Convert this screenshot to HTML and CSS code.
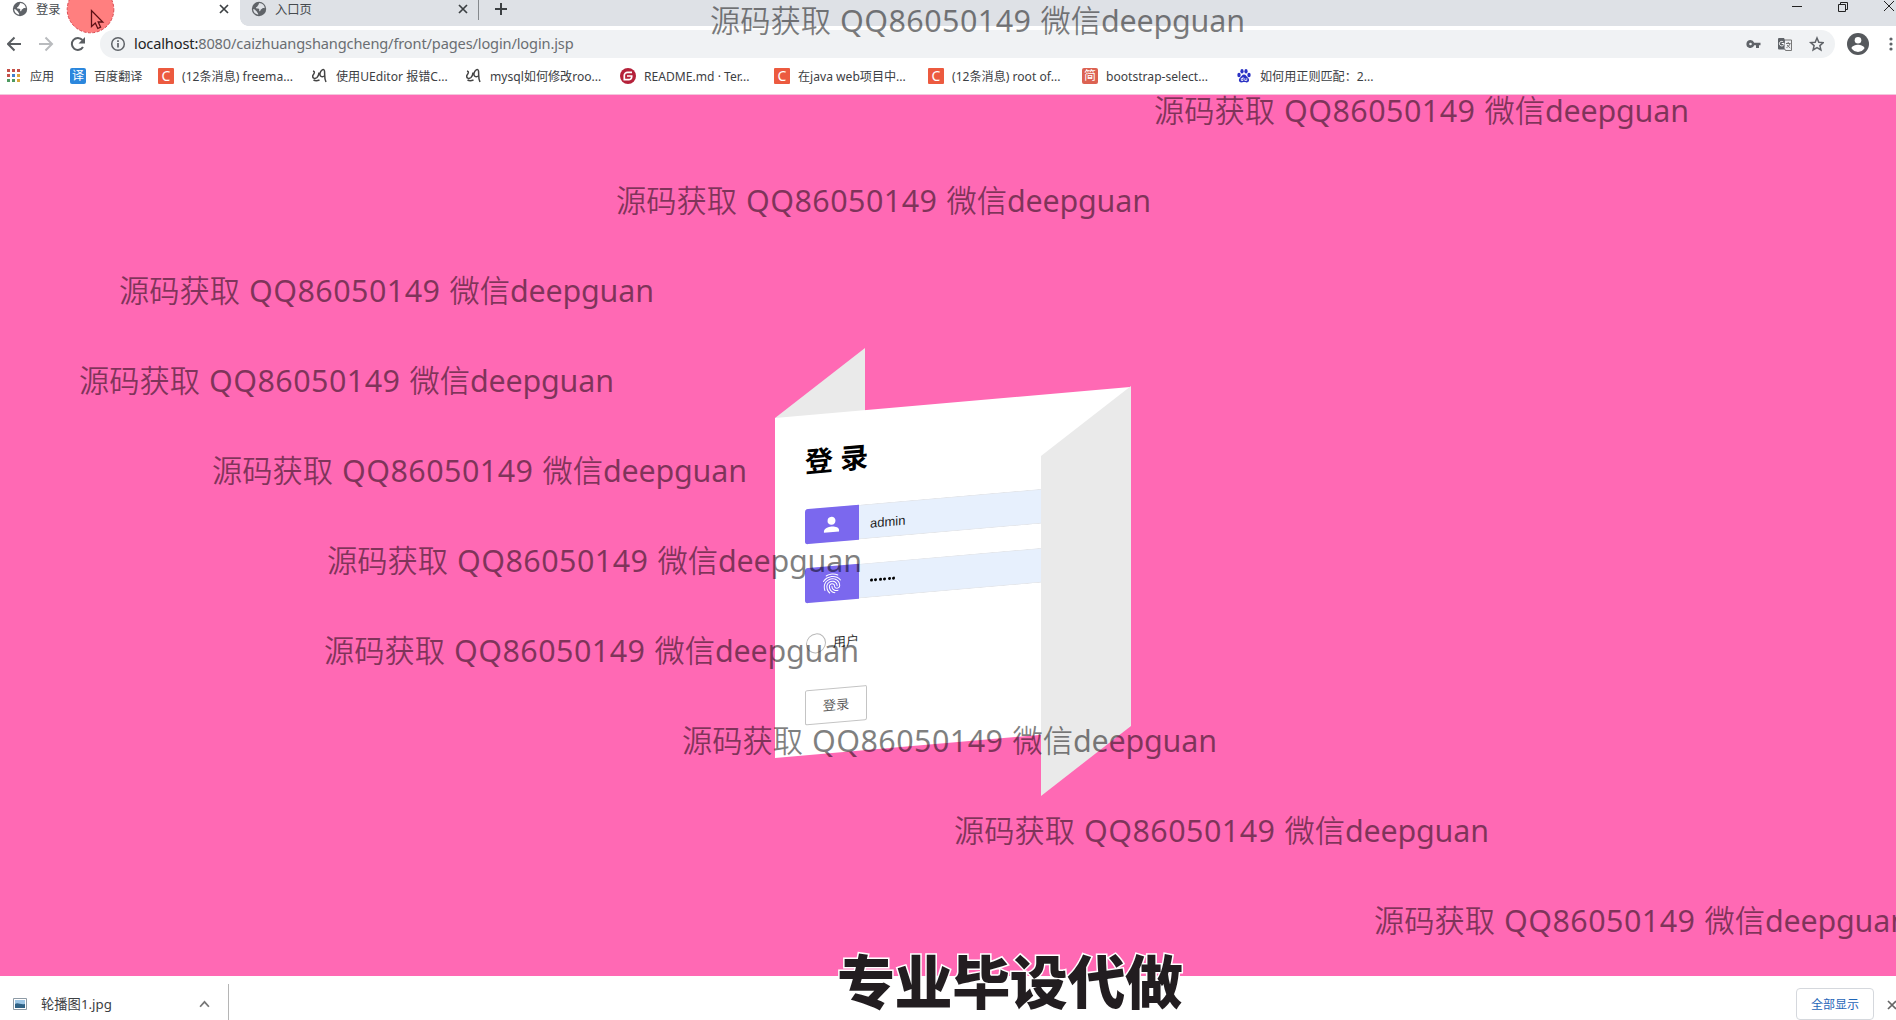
FILE: index.html
```html
<!DOCTYPE html>
<html lang="zh">
<head>
<meta charset="utf-8">
<title>登录</title>
<link rel="stylesheet" href="styles.css">
</head>
<body>
<div class="window">
  <header class="tabstrip">
    <div class="tab active">
      <svg class="globe" viewBox="0 0 16 16"><circle cx="8" cy="8" r="7.2" fill="#5f6368"/><path d="M8.3 2.1c-1 1.200-.2 1.700-1.300 2.300-1 .5-.3 1.300-1.300 1.600-1.200.4-.8 1.600.5 1.600 1.800 0 2.400.7 2 1.900-.4 1 1.100 1 1.200-.1.1-1.100 1.200-.8 1.900-1.800.4-.6 1.300-.5 2.500-.4A5.800 5.800 0 0 0 8.300 2.100zM2.200 8.100c1.200.3 2 .6 2.500 1.500.3.700 1.300.5 1.400 1.400.1.800 1.200.8 1.100 2.700A5.800 5.800 0 0 1 2.200 8.100z" fill="#fff"/></svg>
      <span class="tab-title">登录</span>
      <svg class="close" viewBox="0 0 10 10"><path d="M1 1l8 8M9 1l-8 8"/></svg>
    </div>
    <div class="tab idle">
      <svg class="globe" viewBox="0 0 16 16"><circle cx="8" cy="8" r="7.200" fill="#5f6368"/><path d="M8.300 2.100c-1 1.200-.2 1.700-1.300 2.300-1 .5-.3 1.300-1.300 1.600-1.200.4-.8 1.600.5 1.600 1.800 0 2.400.7 2 1.900-.4 1 1.100 1 1.200-.1.1-1.100 1.200-.8 1.900-1.800.4-.6 1.300-.5 2.500-.4A5.800 5.800 0 0 0 8.300 2.100zM2.200 8.100c1.200.3 2 .6 2.500 1.500.3.700 1.300.5 1.400 1.400.1.800 1.200.8 1.100 2.700A5.800 5.800 0 0 1 2.200 8.100z" fill="#dee1e6"/></svg>
      <span class="tab-title">入口页</span>
      <svg class="close" viewBox="0 0 10 10"><path d="M1 1l8 8M9 1l-8 8"/></svg>
    </div>
    <svg class="newtab" viewBox="0 0 12 12"><path d="M6 0v12M0 6h12"/></svg>
    <svg class="winbtns" viewBox="0 0 104 14"><path d="M0 6.500h10M46.500 4.500h7v7h-7zM48.500 4.500v-2h7v7h-2M92 1l10 10M102 1l-10 10"/></svg>
  </header>

  <div class="toolbar">
    <svg class="nav" viewBox="0 0 80 16"><g fill="none" stroke-width="2"><path d="M14 8H1.500M7.500 1.500L1 8l6.500 6.500" stroke="#5a5e62"/><path d="M32 8h12.500M38.500 1.500L45 8l-6.500 6.500" stroke="#b9bbbe"/><path d="M76 11a6 6 0 1 1-.6-7" stroke="#5a5e62"/></g><path d="M78 1v6.500h-6.500z" fill="#5a5e62"/></svg>
    <div class="omnibox">
      <svg class="info" viewBox="0 0 16 16"><circle cx="8" cy="8" r="6.300" fill="none" stroke="#5f6368" stroke-width="1.500"/><path d="M8 7v4.600M8 4.200v1.700" stroke="#5f6368" stroke-width="1.700"/></svg>
      <span class="url"><b>localhost:</b>8080/caizhuangshangcheng/front/pages/login/login.jsp</span>
      <svg class="actions" viewBox="0 0 78 16"><path d="M4.500 4a4 4 0 1 0 3.700 5.300H10V12h3V9.300h1.500V6.700H8.200A4 4 0 0 0 4.500 4zm0 2.700a1.300 1.300 0 1 1 0 2.600 1.300 1.300 0 0 1 0-2.600z" fill="#5f6368"/><path d="M33 2h5l1.500 3v8.500H33a1 1 0 0 1-1-1V3a1 1 0 0 1 1-1z" fill="#5f6368"/><path d="M39 4h6.500v10.500h-6l-1-2" fill="#eef0f3" stroke="#777" stroke-width="1"/><path d="M38 7.500h-2.300M38 7.500a2.300 2.300 0 1 1-.8-1.600" fill="none" stroke="#fff"/><path d="M40 7.500h4.500M42.200 6v1.500M44 7.500c-.5 2-2 3.500-3.500 4M41 9l3.200 3" fill="none" stroke="#777"/><path d="M71 2l1.800 4.200 4.500.4-3.400 3 1 4.400-3.900-2.300-3.900 2.300 1-4.400-3.400-3 4.500-.4z" fill="none" stroke="#5f6368" stroke-width="1.500"/></svg>
    </div>
    <svg class="profile" viewBox="0 0 22 22"><circle cx="11" cy="11" r="11" fill="#56595d"/><circle cx="11" cy="7.300" r="3.300" fill="#fff"/><path d="M4.500 15.300c0-2.300 4.300-3.500 6.500-3.500s6.500 1.200 6.500 3.500A8 8 0 0 1 11 18.900a8 8 0 0 1-6.500-3.600z" fill="#fff"/></svg>
    <svg class="menu" viewBox="0 0 4 14"><circle cx="2" cy="2" r="1.600"/><circle cx="2" cy="7" r="1.600"/><circle cx="2" cy="12" r="1.600"/></svg>
  </div>

  <nav class="bookmarks">
    <a class="mark apps"><svg viewBox="0 0 16 16"><path d="M1 1h3v3H1zM6 1h3v3H6zM1 6h3v3H1z" fill="#c5524a"/><path d="M11 1h3v3h-3z" fill="#c5524a"/><path d="M1 11h3v3H1zM6 11h3v3H6z" fill="#4f9a61"/><path d="M6 6h3v3H6z" fill="#3f7fd0"/><path d="M11 6h3v3h-3zM11 11h3v3h-3z" fill="#dba53a"/></svg><span>应用</span></a>
    <a class="mark fanyi"><i class="ico blue">译</i><span>百度翻译</span></a>
    <a class="mark"><i class="ico csdn">C</i><span>(12条消息) freema...</span></a>
    <a class="mark"><svg viewBox="0 0 16 16"><path d="M1 3c2.500.5 1 3-.2 4.500C.3 10 2.500 11.500 5 9.500c1.500-1.300 1.800-3 2-5M12 8c-2 1.500-4.500.5-4-2.500C8.500 2 12 0 12.500 3c.5 4-.5 7 1.500 11M7.500 12c-2 .800-4.500.8-6 0" fill="none" stroke="#444" stroke-width="1.500"/></svg><span>使用UEditor 报错C...</span></a>
    <a class="mark"><svg viewBox="0 0 16 16"><path d="M1 3c2.500.5 1 3-.2 4.500C.3 10 2.500 11.500 5 9.500c1.500-1.300 1.800-3 2-5M12 8c-2 1.500-4.500.5-4-2.500C8.500 2 12 0 12.500 3c.5 4-.5 7 1.500 11M7.500 12c-2 .800-4.500.8-6 0" fill="none" stroke="#444" stroke-width="1.500"/></svg><span>mysql如何修改roo...</span></a>
    <a class="mark"><svg viewBox="0 0 16 16"><circle cx="8" cy="8" r="8" fill="#b5213a"/><path d="M12 4.300H7.500a3.200 3.200 0 0 0-3.200 3.200v4.200h4.500a2.900 2.900 0 0 0 2.900-2.900V8H7" fill="none" stroke="#fff" stroke-width="1.700"/></svg><span>README.md · Ter...</span></a>
    <a class="mark"><i class="ico csdn">C</i><span>在java web项目中...</span></a>
    <a class="mark"><i class="ico csdn">C</i><span>(12条消息) root of...</span></a>
    <a class="mark"><i class="ico jian">简</i><span>bootstrap-select...</span></a>
    <a class="mark"><svg viewBox="0 0 16 16" fill="#2b32c4"><ellipse cx="3" cy="7" rx="1.700" ry="2.200"/><ellipse cx="6" cy="3.300" rx="1.600" ry="2.300"/><ellipse cx="10" cy="3.300" rx="1.600" ry="2.300"/><ellipse cx="13" cy="7" rx="1.700" ry="2.200"/><path d="M8 6.500c2 0 2.500 2 4 3.300 2 1.800 1 4.700-1.300 4.700-1.200 0-1.700-.4-2.700-.4s-1.500.4-2.700.4C3 14.500 2 11.600 4 9.800 5.500 8.500 6 6.500 8 6.500z"/><path d="M7 9v3.500H5.300v-2H7M8.800 10.200v2.300h2v-2.300" stroke="#fff" stroke-width=".8" fill="none"/></svg><span>如何用正则匹配：2...</span></a>
  </nav>

  <main class="page">
    <div class="cover">
      <div class="flap back"></div>
      <form class="face">
        <h1>登 录</h1>
        <div class="field">
          <span class="badge"><svg viewBox="0 0 18 18"><circle cx="9" cy="5" r="4.200" fill="#fff"/><path d="M1 17v-1.500C1 12.500 5.500 11 9 11s8 1.500 8 4.500V17z" fill="#fff"/></svg></span>
          <span class="value">admin</span>
        </div>
        <div class="field">
          <span class="badge"><svg class="finger" viewBox="3 2 18 20"><path fill="#fff" d="M17.810 4.470c-.080 0-.160-.020-.230-.060C15.660 3.420 14 3 12.010 3c-1.980 0-3.860.470-5.570 1.410-.240.130-.540.040-.680-.200-.130-.240-.040-.550.200-.680C7.820 2.520 9.860 2 12.010 2c2.130 0 3.990.470 6.030 1.520.250.130.340.430.210.670-.090.180-.260.280-.440.280zM3.500 9.720c-.100 0-.200-.030-.290-.090-.230-.160-.280-.470-.120-.700.990-1.400 2.250-2.500 3.750-3.270C9.980 4.040 14 4.030 17.150 5.650c1.500.770 2.760 1.860 3.750 3.250.160.220.110.540-.120.700-.230.160-.540.110-.700-.120-.900-1.260-2.040-2.250-3.390-2.940-2.870-1.470-6.540-1.470-9.400.010-1.360.700-2.500 1.700-3.400 2.960-.080.140-.230.210-.390.210zm6.250 12.070c-.130 0-.260-.050-.350-.150-.870-.870-1.340-1.430-2.010-2.640-.690-1.230-1.050-2.730-1.050-4.340 0-2.970 2.540-5.390 5.660-5.390s5.660 2.420 5.660 5.390c0 .280-.220.500-.500.500s-.500-.220-.500-.500c0-2.420-2.090-4.390-4.660-4.390-2.570 0-4.660 1.970-4.660 4.390 0 1.440.320 2.770.930 3.850.640 1.150 1.080 1.640 1.850 2.420.190.200.190.510 0 .710-.110.100-.240.150-.370.150zm7.170-1.850c-1.190 0-2.240-.300-3.100-.890-1.490-1.010-2.380-2.650-2.380-4.390 0-.280.220-.500.500-.500s.500.220.500.500c0 1.410.720 2.740 1.940 3.560.710.480 1.540.710 2.540.710.240 0 .640-.030 1.040-.100.270-.050.530.130.580.410.050.270-.130.530-.410.580-.570.110-1.070.120-1.210.120zM14.910 22c-.040 0-.090-.010-.130-.020-1.590-.440-2.630-1.030-3.720-2.100-1.400-1.390-2.170-3.240-2.170-5.220 0-1.620 1.380-2.940 3.080-2.940 1.700 0 3.080 1.320 3.080 2.940 0 1.070.930 1.940 2.080 1.940s2.080-.870 2.080-1.940c0-3.770-3.250-6.830-7.250-6.830-2.840 0-5.440 1.580-6.610 4.030-.390.810-.590 1.760-.590 2.800 0 .780.070 2.010.670 3.610.100.260-.030.550-.290.640-.260.100-.550-.040-.640-.290-.490-1.310-.730-2.610-.730-3.960 0-1.200.230-2.290.680-3.240 1.330-2.790 4.280-4.600 7.510-4.600 4.550 0 8.250 3.510 8.250 7.830 0 1.620-1.380 2.940-3.080 2.940s-3.080-1.320-3.080-2.940c0-1.070-.930-1.940-2.080-1.940s-2.080.870-2.080 1.940c0 1.710.660 3.310 1.870 4.510.950.940 1.860 1.460 3.270 1.850.270.070.420.350.350.610-.050.230-.260.380-.470.380z"/></svg></span>
          <span class="value dots"><i></i><i></i><i></i><i></i><i></i><i></i></span>
        </div>
        <label class="role"><span class="radio"></span>用户</label>
        <div class="submit">登录</div>
      </form>
      <div class="flap front"></div>
    </div>
  </main>

  <footer class="shelf">
    <div class="download">
      <svg class="thumb" viewBox="0 0 14 12"><path d="M.5.500h13v11H.5z" fill="#fff" stroke="#8d9aa5"/><path d="M2 2h10v8H2z" fill="#9cc6e6"/><path d="M2 6c3-2 5 1 10 0v4H2z" fill="#2f6286"/></svg>
      <span class="file">轮播图1.jpg</span>
      <svg class="chev" viewBox="0 0 10 7"><path d="M1 6l4-4.500L9 6"/></svg>
    </div>
    <div class="showall">全部显示</div>
    <svg class="close shelf-close" viewBox="0 0 10 10"><path d="M1 1l8 8M9 1l-8 8"/></svg>
  </footer>
</div>

<svg class="overlay" width="1896" height="1020" viewBox="0 0 1896 1020">
  <circle cx="90.500" cy="9.500" r="23.300" fill="#ff7f7f" stroke="#d9484f" stroke-dasharray="3 1.500"/>
  <path d="M91.500 10.500v16l3.800-3.500 2.500 5.500 2.800-1.300-2.400-5.200h4.600z" fill="#ff7f7f" stroke="#5c1015" stroke-width="1.300"/>
  <g class="wm">
    <g transform="translate(710 31.500)"><text class="han" textLength="121">源码获取</text><text x="130" textLength="191">QQ86050149</text><text class="han" x="330.500" textLength="60.500">微信</text><text x="391" textLength="144">deepguan</text></g>
    <g transform="translate(1154 121.500)"><text class="han" textLength="121">源码获取</text><text x="130" textLength="191">QQ86050149</text><text class="han" x="330.500" textLength="60.500">微信</text><text x="391" textLength="144">deepguan</text></g>
    <g transform="translate(616 211.500)"><text class="han" textLength="121">源码获取</text><text x="130" textLength="191">QQ86050149</text><text class="han" x="330.500" textLength="60.500">微信</text><text x="391" textLength="144">deepguan</text></g>
    <g transform="translate(119 301.500)"><text class="han" textLength="121">源码获取</text><text x="130" textLength="191">QQ86050149</text><text class="han" x="330.500" textLength="60.500">微信</text><text x="391" textLength="144">deepguan</text></g>
    <g transform="translate(79 391.500)"><text class="han" textLength="121">源码获取</text><text x="130" textLength="191">QQ86050149</text><text class="han" x="330.500" textLength="60.500">微信</text><text x="391" textLength="144">deepguan</text></g>
    <g transform="translate(212 481.500)"><text class="han" textLength="121">源码获取</text><text x="130" textLength="191">QQ86050149</text><text class="han" x="330.500" textLength="60.500">微信</text><text x="391" textLength="144">deepguan</text></g>
    <g transform="translate(327 571.500)"><text class="han" textLength="121">源码获取</text><text x="130" textLength="191">QQ86050149</text><text class="han" x="330.500" textLength="60.500">微信</text><text x="391" textLength="144">deepguan</text></g>
    <g transform="translate(324 661.500)"><text class="han" textLength="121">源码获取</text><text x="130" textLength="191">QQ86050149</text><text class="han" x="330.500" textLength="60.500">微信</text><text x="391" textLength="144">deepguan</text></g>
    <g transform="translate(682 751.500)"><text class="han" textLength="121">源码获取</text><text x="130" textLength="191">QQ86050149</text><text class="han" x="330.500" textLength="60.500">微信</text><text x="391" textLength="144">deepguan</text></g>
    <g transform="translate(954 841.500)"><text class="han" textLength="121">源码获取</text><text x="130" textLength="191">QQ86050149</text><text class="han" x="330.500" textLength="60.500">微信</text><text x="391" textLength="144">deepguan</text></g>
    <g transform="translate(1374 931.500)"><text class="han" textLength="121">源码获取</text><text x="130" textLength="191">QQ86050149</text><text class="han" x="330.500" textLength="60.500">微信</text><text x="391" textLength="144">deepguan</text></g>
  </g>
  <text class="caption" x="837" y="1003.500" textLength="346">专业毕设代做</text>
</svg>
</body>
</html>
```
FILE: styles.css
```css
* { box-sizing: border-box; }
body {
  margin: 0;
  font-family: "Noto Sans", "Noto Sans CJK SC", sans-serif;
  overflow: hidden;
}
svg { display: block; flex: none; }
i { font-style: normal; }
.window { width: 1896px; height: 1020px; display: flex; flex-direction: column; background: #fff; overflow: hidden; }

.tabstrip { height: 26px; flex: none; display: flex; background: #dee1e6; }
.tab { height: 26px; display: flex; align-items: flex-start; padding-top: 1px; }
.tab.active { width: 240px; background: #fff; padding-left: 12px; padding-right: 11px; }
.tab.idle { width: 239px; padding-left: 11px; padding-right: 11px; position: relative; background: linear-gradient(#85888c, #85888c) right top / 1px 20px no-repeat; }
.tab.idle::before { content: ""; position: absolute; left: 0; bottom: 0; width: 8px; height: 8px; background: radial-gradient(circle at 8px 0, #dee1e6 7.5px, #fff 8px); }
.globe { width: 16px; height: 16px; }
.tab-title { font-size: 12.3px; line-height: 17px; margin-left: 8px; flex: 1; color: #45494d; }
.close { width: 10px; height: 10px; margin-top: 3px; fill: none; stroke: #3c4043; stroke-width: 1.7; }
.newtab { width: 12px; height: 12px; margin: 3px 0 0 16px; stroke: #3c4043; stroke-width: 2; }
.winbtns { width: 104px; height: 14px; margin-left: auto; margin-right: 0; fill: none; stroke: #222; }

.toolbar { height: 36px; flex: none; display: flex; align-items: center; padding-left: 7px; }
.nav { width: 80px; height: 16px; }
.omnibox { width: 1735px; height: 28px; margin-left: 13px; border-radius: 14px; background: #f0f2f4; display: flex; align-items: center; padding-left: 10px; }
.info { width: 16px; height: 16px; }
.url { flex: 1; margin: -2px 0 0 8px; font-size: 14.6px; letter-spacing: -.14px; line-height: 20px; color: #6a6e72; white-space: nowrap; }
.url b { font-weight: 400; color: #222; }
.actions { width: 78px; height: 16px; margin-right: 11px; }
.profile { width: 22px; height: 22px; margin-left: 12px; }
.menu { width: 4px; height: 14px; margin-left: 20px; fill: #5f6368; }

.bookmarks { height: 33px; flex: none; display: flex; padding-left: 6px; border-bottom: 1px solid #f3c6dd; }
.mark { width: 154px; height: 28px; display: flex; align-items: center; font-size: 12.1px; color: #3c4043; white-space: nowrap; }
.mark.apps { width: 64px; }
.mark.fanyi { width: 88px; }
.mark svg, .ico { width: 16px; height: 16px; flex: none; margin-right: 8px; }
.ico { color: #fff; text-align: center; line-height: 16px; font-size: 12px; border-radius: 2px; }
.blue { background: #2b87dd; }
.csdn { background: #ec5a3f; font-size: 14px; border-radius: 1px; }
.jian { background: #dc6252; }

.page { height: 881px; flex: none; background: #ff69b4; padding: 322.5px 0 0 775px; }
.cover { width: 355px; height: 340px; position: relative; }
.face { position: relative; width: 355px; height: 340px; background: #fff; padding: 25.5px 30px 0 30px; transform: skewY(-5deg); transform-origin: 0 0; }
.flap { position: absolute; top: 0; width: 90px; height: 340px; background: #eaeaea; transform: skewY(-37.9deg); transform-origin: 0 0; }
.back { left: 0; }
.front { left: 265.5px; top: 38.5px; width: 89.5px; }
h1 { margin: 0 0 28.5px; height: 40px; font-size: 28px; line-height: 40px; font-weight: 700; color: #000; white-space: nowrap; }
.field { height: 35px; margin-bottom: 23.5px; display: flex; border: 1px solid #e4e6ea; border-left: 0; border-radius: 3px; background: #e7f0fd; }
.badge { width: 53.5px; margin: -1px 0; background: #7b68ee; border-radius: 3px 0 0 3px; display: flex; align-items: center; justify-content: center; }
.badge svg { width: 17px; height: 17px; }
.badge .finger { width: 18px; height: 21px; }
.value { padding-left: 11.5px; font: 13px/37px "Liberation Sans", sans-serif; color: #222; }
.dots { display: flex; align-items: center; gap: 1.4px; }
.dots i { width: 3px; height: 3px; border-radius: 50%; background: #000; }
.role { display: flex; align-items: center; height: 20px; margin-top: 31.5px; font-size: 13px; font-weight: 350; line-height: 16px; color: #222; }
.radio { width: 20px; height: 20px; margin: 0 7.5px 0 .5px; border: 1px solid #b8b8b8; border-radius: 50%; }
.submit { width: 62px; height: 35px; margin-top: 35.5px; border: 1px solid #c4c4c4; border-radius: 2px; text-align: center; font-size: 13.3px; font-weight: 350; line-height: 33px; color: #555; }

.shelf { flex: 1; display: flex; background: #fff; padding-top: 8px; }
.download { width: 229px; height: 40px; border-right: 1px solid #b5b5b5; display: flex; align-items: center; padding: 0 18px 0 13px; }
.thumb { width: 14px; height: 12px; }
.file { flex: 1; margin: -2px 0 0 14px; font-size: 13.3px; color: #3c4043; }
.chev { width: 11px; height: 8px; fill: none; stroke: #777; stroke-width: 1.6; }
.showall { width: 78px; height: 32px; margin: 4px 12px 0 auto; border: 1px solid #d5d8dd; border-radius: 4px; font-size: 12px; line-height: 31px; text-align: center; color: #1f66b8; }
.shelf-close { margin: 16px -2px 0 0; stroke: #666; width: 12px; }

.overlay { position: absolute; left: 0; top: 0; pointer-events: none; }
.wm { font: 400 30.5px "Noto Sans", sans-serif; fill: #000; fill-opacity: .5; }
.wm .han { font: 350 30.3px "Noto Sans CJK SC", sans-serif; }
.caption { font: 900 58px "Noto Sans CJK SC", sans-serif; fill: #221d20; stroke: #fff; stroke-width: 3px; paint-order: stroke; }
```
